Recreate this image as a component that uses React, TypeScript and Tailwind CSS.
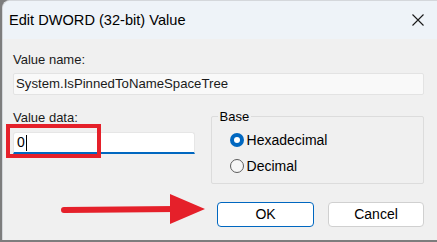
export default function App() {
  return (
    <div className="relative w-[437px] h-[242px] bg-[#7d7d7d] pl-[2px] pb-[2px] overflow-hidden font-['Liberation_Sans',sans-serif] text-black">
      <div className="h-full bg-[#f0f0f0] rounded-tl-[8px] overflow-hidden flex flex-col border-t border-l border-[#d4d7db]">
        <div className="h-[38px] shrink-0 bg-[#eef3f8] flex items-center justify-between pl-[6px] pr-[13px]">
          <span className="text-[14.6px] leading-none">Edit DWORD (32-bit) Value</span>
          <svg width="12" height="12" viewBox="0 0 12 12">
            <path d="M0.5 0.5 L11.5 11.5 M11.5 0.5 L0.5 11.5" stroke="#1a1a1a" strokeWidth="1.1" />
          </svg>
        </div>
        <div className="flex flex-col pl-[10px] pr-[13px] pt-[12px]">
          <div className="text-[13px] leading-[17px] text-[#1a1a1a]">Value name:</div>
          <div className="mt-[5px] h-[22px] bg-[#f9f9f9] border border-[#e3e3e3] rounded-[2px] flex items-center pl-[2px] text-[13.2px] text-[#1a1a1a]">
            System.IsPinnedToNameSpaceTree
          </div>
          <div className="flex mt-[14px] items-start">
            <div className="w-[182px] flex flex-col">
              <div className="text-[13px] leading-[17px] text-[#1a1a1a]">Value data:</div>
              <div className="mt-[6px] h-[22px] bg-white border-x border-t border-[#e6e6e6] border-b-2 border-b-[#0067c0] rounded-t-[3px] flex items-center pl-[3px] text-[14px]">
                <span>0</span>
                <span className="w-[1px] h-[16px] bg-black ml-[1px]" />
              </div>
            </div>
            <div className="relative ml-[16px] mt-[7px] w-[214px] h-[68px] border border-[#dcdcdc] rounded-[2px]">
              <span className="absolute -top-[9px] left-[6px] px-[2px] bg-[#f0f0f0] text-[13px] leading-[17px]">Base</span>
              <div className="flex flex-col pl-[18px] pt-[16px] gap-[12px]">
                <div className="flex items-center gap-[3px] h-[14px]">
                  <span className="w-[14px] h-[14px] rounded-full bg-[#0067c0] flex items-center justify-center">
                    <span className="w-[6px] h-[6px] rounded-full bg-white" />
                  </span>
                  <span className="text-[14px] leading-none">Hexadecimal</span>
                </div>
                <div className="flex items-center gap-[3px] h-[14px]">
                  <span className="w-[14px] h-[14px] rounded-full border border-[#5c5c5c] bg-[#f6f6f6]" />
                  <span className="text-[14px] leading-none">Decimal</span>
                </div>
              </div>
            </div>
          </div>
          <div className="flex justify-end gap-[14px] mt-[18px]">
            <div className="w-[97px] h-[25px] bg-white border border-[#0067c0] rounded-[4px] flex items-center justify-center text-[14px]">OK</div>
            <div className="w-[96px] h-[25px] bg-white border border-[#d0d0d0] rounded-[4px] flex items-center justify-center text-[14px]">Cancel</div>
          </div>
        </div>
      </div>
      <div className="absolute left-[6px] top-[124px] w-[95px] h-[34px] border-[4px] border-[#e5202a]" />
      <svg className="absolute left-0 top-0" width="437" height="242" viewBox="0 0 437 242">
        <line x1="64" y1="210" x2="176" y2="209" stroke="#e5202a" strokeWidth="6" strokeLinecap="round" />
        <polygon points="170,194 205,209 170,224" fill="#e5202a" />
      </svg>
    </div>
  );
}
